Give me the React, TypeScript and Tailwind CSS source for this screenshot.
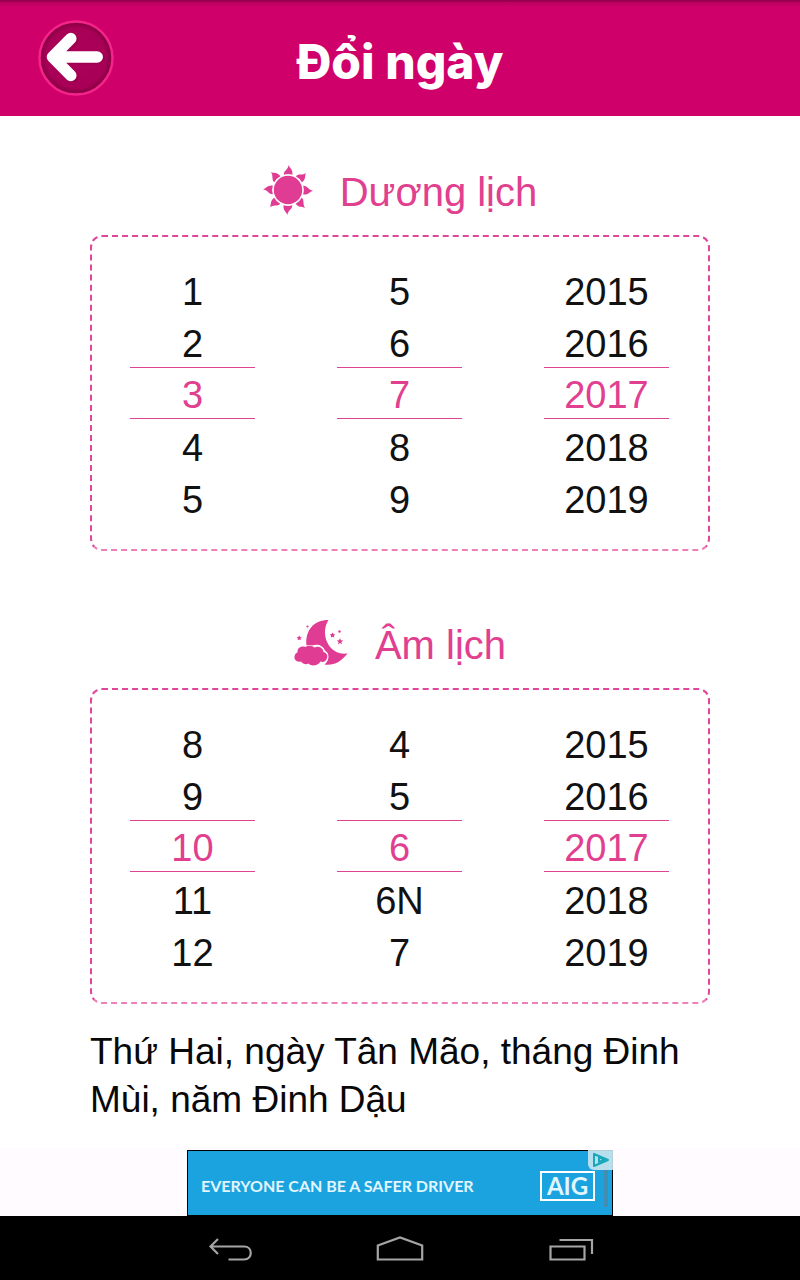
import { useState } from "react";

type WheelProps = {
  label: string;
  values: string[];
};

function Wheel({ label, values }: WheelProps) {
  const [selected, setSelected] = useState(2);
  return (
    <div role="group" aria-label={label} className="flex w-[125px] flex-col">
      {values.map((value, i) => (
        <button
          key={value}
          type="button"
          aria-pressed={i === selected}
          onClick={() => setSelected(i)}
          className={
            i === selected
              ? "h-[52px] border-y border-[#dc4592] pt-1 text-[38px] leading-[46px] text-[#e0408f]"
              : "h-[52px] pt-1.5 text-[38px] leading-[46px] text-[#111111]"
          }
        >
          {value}
        </button>
      ))}
    </div>
  );
}

function Wheels({ days, months, years }: { days: string[]; months: string[]; years: string[] }) {
  return (
    <div className="mx-[90px] flex justify-between rounded-xl border-2 border-dashed border-[#e0479a] border-b-[#ec80b9] pt-[26px] pr-[39px] pb-[26px] pl-[38px]">
      <Wheel label="Ngày" values={days} />
      <Wheel label="Tháng" values={months} />
      <Wheel label="Năm" values={years} />
    </div>
  );
}

const rays = [0, 45, 90, 135, 180, 225, 270, 315];

function SunIcon() {
  return (
    <svg viewBox="0 0 50 50" className="size-[50px]" fill="#e03c93" aria-hidden="true">
      <circle cx="25" cy="25" r="14.200" />
      {rays.map((angle) => (
        <path
          key={angle}
          transform={`rotate(${angle} 25 25)`}
          d="M20.800 9.800C20.500 5.500 25.500 4.500 25.500 0C26.500 3 30.200 4.500 29.400 9.800Q25 8.400 20.800 9.800Z"
        />
      ))}
    </svg>
  );
}

function MoonIcon() {
  return (
    <svg viewBox="0 0 54 48" className="h-12 w-[54px]" fill="#e03c93" aria-hidden="true">
      <path d="M34.500 1C28 11 31 25 40 31.500C44 34.500 49 35 53.500 34.500C47 43 39 47 30.500 45.500C36 41 35.500 34 31 31.500C29 26 23 24.500 18 26.500C16.500 26 14.500 26 12.500 26.500C11 11 20 1 34.500 1Z" />
      <path d="M7 42.500C2.500 43.500 0 40.500 .5 37.500C.8 35 2 34 3.500 33.500C3 29 7 26.500 11.500 28C15 25.500 19 27.500 20.500 28.500C25 26.500 29 29 29.500 33C33 34 34.500 37 32.500 40.500C31 43 28.500 43.500 26.500 42.500C24 47 17 47.500 14.500 44.500C12 46 9 45 7 42.500Z" />
      <path d="m5.200 16.500.8 1.500 1.700.2-1.200 1.200.3 1.800-1.600-.8-1.600.8.300-1.800-1.200-1.200 1.700-.2zM38.500 13.500l.9 1.600 1.800.3-1.300 1.300.3 1.900-1.700-.9-1.700.9.300-1.900-1.300-1.300 1.800-.3zM46 19l.9 2.300 2.400.2-1.900 1.500.7 2.300-2.100-1.300-2 1.400.6-2.400-1.900-1.500 2.400-.2z" />
      <circle cx="13.500" cy="7.500" r="1.100" />
      <circle cx="45.500" cy="12.500" r="1.200" />
    </svg>
  );
}

function AdBanner() {
  return (
    <div className="flex justify-center bg-[#fffbff] pt-0.5">
      <a
        href="#ad"
        className="relative flex h-[66px] w-[426px] items-center justify-between border border-black bg-[#1aa3df] pt-1.5 pr-[17px] pl-[13px] font-['Lato',sans-serif] text-[#e2f6ff]"
      >
        <span className="text-base font-bold whitespace-nowrap">EVERYONE CAN BE A SAFER DRIVER</span>
        <span className="flex h-[30px] w-[55px] items-center justify-center border-2 border-white text-2xl leading-none font-bold">
          AIG
        </span>
        <span className="absolute top-1 right-1 h-[52px] w-1 bg-[#57839b]/70" />
        <span className="absolute -top-px -right-px flex h-5 w-[25px] items-center justify-center rounded-bl-md bg-[#c9e5f0]/90">
          <svg viewBox="0 0 18 16" className="h-4 w-[18px]" fill="none" stroke="#18a7bb" strokeWidth="2" aria-hidden="true">
            <path d="M2 2v12l14-6zM7 5v5l5-2z" strokeLinejoin="round" />
          </svg>
        </span>
      </a>
    </div>
  );
}

function NavigationBar() {
  return (
    <nav className="flex h-16 justify-center gap-[124px] bg-black pt-1" aria-label="Điều hướng">
      <button type="button" aria-label="Quay lại">
        <svg viewBox="0 0 48 32" className="h-8 w-12" fill="none" stroke="#a5a5a5" strokeWidth="2.200">
          <path d="M14 5 6.500 12.500 14 20M6.500 12.500H40C49 12.500 49 25.500 40 25.500H24.500" />
        </svg>
      </button>
      <button type="button" aria-label="Màn hình chính">
        <svg viewBox="0 0 48 32" className="h-8 w-12" fill="none" stroke="#a5a5a5" strokeWidth="2.200">
          <path d="M1.800 25.500V11.500L24 3.500 46.200 11.500V25.500Z" />
        </svg>
      </button>
      <button type="button" aria-label="Ứng dụng gần đây">
        <svg viewBox="0 0 48 32" className="h-8 w-12" fill="none" stroke="#a5a5a5" strokeWidth="2.200">
          <path d="M2.500 12.500H36.500V25.500H2.500ZM11.500 6H44V20" />
        </svg>
      </button>
    </nav>
  );
}

export default function App() {
  return (
    <div className="flex min-h-screen flex-col bg-white font-['Liberation_Sans',sans-serif]">
      <header className="grid h-[116px] grid-cols-[1fr_auto_1fr] items-center border-t-2 border-[#98004f] bg-linear-to-b from-[#b90060] to-[#d0006a] to-5% px-[38px] pb-0.5">
        <button type="button" aria-label="Quay lại" className="size-[76px]">
          <svg viewBox="0 0 76 76" className="size-[76px]" fill="none">
            <defs>
              <radialGradient id="disc">
                <stop offset="0" stopColor="#ad0059" />
                <stop offset=".82" stopColor="#a80056" />
                <stop offset="1" stopColor="#83003f" />
              </radialGradient>
            </defs>
            <circle cx="38" cy="38" r="36.500" fill="url(#disc)" stroke="#f5248a" strokeWidth="2.500" />
            <path d="M35 20 16 38.500 35 57M18 38.500H61" stroke="#8c0046" strokeOpacity=".4" strokeWidth="12" strokeLinecap="round" strokeLinejoin="round" />
            <path d="M32.800 18.500 14.500 37 32.800 55.500M16 37H59.200" stroke="#fff" strokeWidth="11.500" strokeLinecap="round" strokeLinejoin="round" />
          </svg>
        </button>
        <h1 className="pt-2 font-['Inter',sans-serif] text-5xl leading-[56px] font-extrabold text-white">Đổi ngày</h1>
      </header>

      <main className="flex-1">
        <section className="pt-[46px]">
          <h2 className="mb-[17px] flex h-14 items-center justify-center gap-[27px] text-[40px] text-[#e0408f]">
            <SunIcon />
            <span className="pt-1">Dương lịch</span>
          </h2>
          <Wheels
            days={["1", "2", "3", "4", "5"]}
            months={["5", "6", "7", "8", "9"]}
            years={["2015", "2016", "2017", "2018", "2019"]}
          />
        </section>

        <section className="pt-16">
          <h2 className="mb-[17px] flex h-14 items-center justify-center gap-[27px] text-[40px] text-[#e0408f]">
            <MoonIcon />
            <span className="pt-1">Âm lịch</span>
          </h2>
          <Wheels
            days={["8", "9", "10", "11", "12"]}
            months={["4", "5", "6", "6N", "7"]}
            years={["2015", "2016", "2017", "2018", "2019"]}
          />
        </section>

        <p className="mx-[90px] pt-6 text-[37px] leading-[48px] text-[#080808]">
          Thứ Hai, ngày Tân Mão, tháng Đinh Mùi, năm Đinh Dậu
        </p>
      </main>

      <footer>
        <AdBanner />
        <NavigationBar />
      </footer>
    </div>
  );
}
